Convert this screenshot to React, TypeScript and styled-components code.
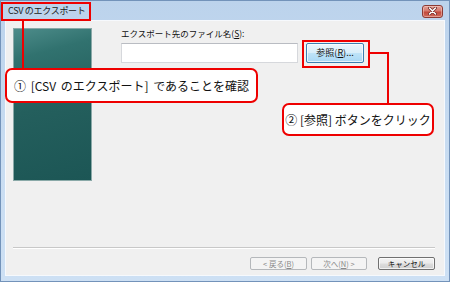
import React from "react";
import styled, { createGlobalStyle } from "styled-components";

const GlobalStyle = createGlobalStyle`
  html, body {
    margin: 0;
    padding: 0;
    background: #ffffff;
  }
  body {
    font-family: "Noto Sans CJK JP", "Noto Sans", sans-serif;
    color: #000;
  }
  * {
    box-sizing: border-box;
  }
`;

const Window = styled.div`
  position: relative;
  width: 450px;
  height: 282px;
  display: flex;
  flex-direction: column;
  border: 1px solid #7393ba;
  background: linear-gradient(#bcd3ec, #c9ddf2 60%, #cde0f4);
  padding: 0 4px 5px;
  overflow: hidden;
`;

const TitleBar = styled.div`
  height: 19px;
  display: flex;
  align-items: center;
  justify-content: space-between;
  padding: 1px 2px 0 3px;
`;

const Title = styled.span`
  font-size: 9px;
  line-height: 12px;
  letter-spacing: -0.3px;
  color: #1a1a1a;
`;

const CloseButton = styled.span`
  width: 21px;
  height: 13px;
  display: flex;
  align-items: center;
  justify-content: center;
  border: 1px solid #8c3b35;
  border-radius: 3px;
  background: linear-gradient(#e3a198, #d57a6e 45%, #c24a3d 55%, #cf6b5d);
  box-shadow: inset 0 0 0 1px rgba(255, 220, 210, 0.45);
`;

const Body = styled.div`
  flex: 1;
  display: flex;
  flex-direction: column;
  background: #f0f0f0;
  border: 1px solid #f6f9fd;
`;

const Main = styled.div`
  flex: 1;
  display: flex;
  padding: 7px 0 0 7px;
`;

const SidePanel = styled.div`
  width: 79px;
  height: 153px;
  border: 1px solid #8aa9a8;
  background: linear-gradient(
    165deg,
    #4d8c8a 0%,
    #31726f 18%,
    #245f5d 50%,
    #1c5655 100%
  );
`;

const Form = styled.div`
  margin-left: 29px;
  display: flex;
  flex-direction: column;
`;

const Label = styled.div`
  font-size: 8.5px;
  line-height: 11px;
  color: #111;
`;

const InputRow = styled.div`
  margin-top: 4px;
  display: flex;
  align-items: flex-start;
`;

const TextInput = styled.div`
  width: 177px;
  height: 20px;
  background: #ffffff;
  border: 1px solid #d6d8dc;
  border-top-color: #b9bcc2;
`;

type Variant = "focus" | "default" | "disabled";

const Button = styled.div<{ $variant?: Variant }>`
  display: flex;
  align-items: center;
  justify-content: center;
  border-radius: 2px;
  white-space: nowrap;
  border: 1px solid
    ${(p) =>
      p.$variant === "focus"
        ? "#3c7fb1"
        : p.$variant === "disabled"
        ? "#b5b8bb"
        : "#707070"};
  background: ${(p) =>
    p.$variant === "focus"
      ? "linear-gradient(#e9f5fc, #d9eefa 48%, #bee3f8 52%, #a9d8f5)"
      : p.$variant === "disabled"
      ? "#f4f4f4"
      : "linear-gradient(#f2f2f2, #ebebeb 48%, #dddddd 52%, #cfcfcf)"};
  box-shadow: inset 0 0 0 1px
    ${(p) => (p.$variant === "disabled" ? "#f4f4f4" : "rgba(255,255,255,0.7)")};
  color: ${(p) => (p.$variant === "disabled" ? "#8a8a8a" : "#111")};
`;

const BrowseButton = styled(Button)`
  width: 58px;
  height: 20px;
  margin-left: 8px;
  font-size: 9px;
  line-height: 12px;
`;

const Separator = styled.div`
  margin: 0 9px 0 7px;
  height: 2px;
  border-top: 1px solid #c8c8c8;
  border-bottom: 1px solid #ffffff;
`;

const Footer = styled.div`
  display: flex;
  justify-content: flex-end;
  align-items: center;
  padding: 8px 9px 5px 0;
`;

const FooterButton = styled(Button)<{ $w?: number; $gap?: number }>`
  width: ${(p) => p.$w ?? 57}px;
  height: 13px;
  margin-left: ${(p) => p.$gap ?? 0}px;
  font-size: 7.5px;
  line-height: 10px;
`;

/* annotations drawn over the dialog */
const Mark = styled.div<{ $l: number; $t: number; $w: number; $h: number }>`
  position: absolute;
  left: ${(p) => p.$l}px;
  top: ${(p) => p.$t}px;
  width: ${(p) => p.$w}px;
  height: ${(p) => p.$h}px;
  border: 2px solid #ee0000;
`;

const Line = styled.div<{ $l: number; $t: number; $w: number; $h: number }>`
  position: absolute;
  left: ${(p) => p.$l}px;
  top: ${(p) => p.$t}px;
  width: ${(p) => p.$w}px;
  height: ${(p) => p.$h}px;
  background: #ee0000;
`;

const Callout = styled(Mark)<{ $spacing?: number }>`
  display: flex;
  align-items: center;
  justify-content: center;
  background: #ffffff;
  border-radius: 7px;
  font-size: 12px;
  line-height: 16px;
  word-spacing: ${(p) => p.$spacing ?? 2}px;
  color: #111;
  white-space: nowrap;
`;

export default function App() {
  return (
    <>
      <GlobalStyle />
      <Window>
        <TitleBar>
          <Title>CSV のエクスポート</Title>
          <CloseButton>
            <svg width="9" height="8" viewBox="0 0 9 8">
              <path
                d="M1.5 1 L7.5 7 M7.5 1 L1.5 7"
                stroke="#6b2420"
                strokeWidth="3"
                strokeLinecap="round"
              />
              <path
                d="M1.5 1 L7.5 7 M7.5 1 L1.5 7"
                stroke="#ffffff"
                strokeWidth="1.6"
                strokeLinecap="round"
              />
            </svg>
          </CloseButton>
        </TitleBar>
        <Body>
          <Main>
            <SidePanel />
            <Form>
              <Label>
                エクスポート先のファイル名(<u>S</u>):
              </Label>
              <InputRow>
                <TextInput />
                <BrowseButton $variant="focus">
                  参照(<u>R</u>)...
                </BrowseButton>
              </InputRow>
            </Form>
          </Main>
          <Separator />
          <Footer>
            <FooterButton $variant="disabled">
              &lt; 戻る(<u>B</u>)
            </FooterButton>
            <FooterButton $variant="disabled" $w={56} $gap={4}>
              次へ(<u>N</u>) &gt;
            </FooterButton>
            <FooterButton $variant="default" $gap={11}>
              キャンセル
            </FooterButton>
          </Footer>
        </Body>

        <Mark $l={0} $t={1} $w={90} $h={19} />
        <Line $l={21} $t={20} $w={2} $h={48} />
        <Callout $l={4} $t={67} $w={253} $h={35}>
          ① [CSV のエクスポート] であることを確認
        </Callout>

        <Mark $l={301} $t={39} $w={68} $h={28} />
        <Line $l={369} $t={51} $w={19} $h={2} />
        <Line $l={386} $t={51} $w={2} $h={52} />
        <Callout $l={281} $t={102} $w={152} $h={33} $spacing={0}>
          ② [参照] ボタンをクリック
        </Callout>
      </Window>
    </>
  );
}
